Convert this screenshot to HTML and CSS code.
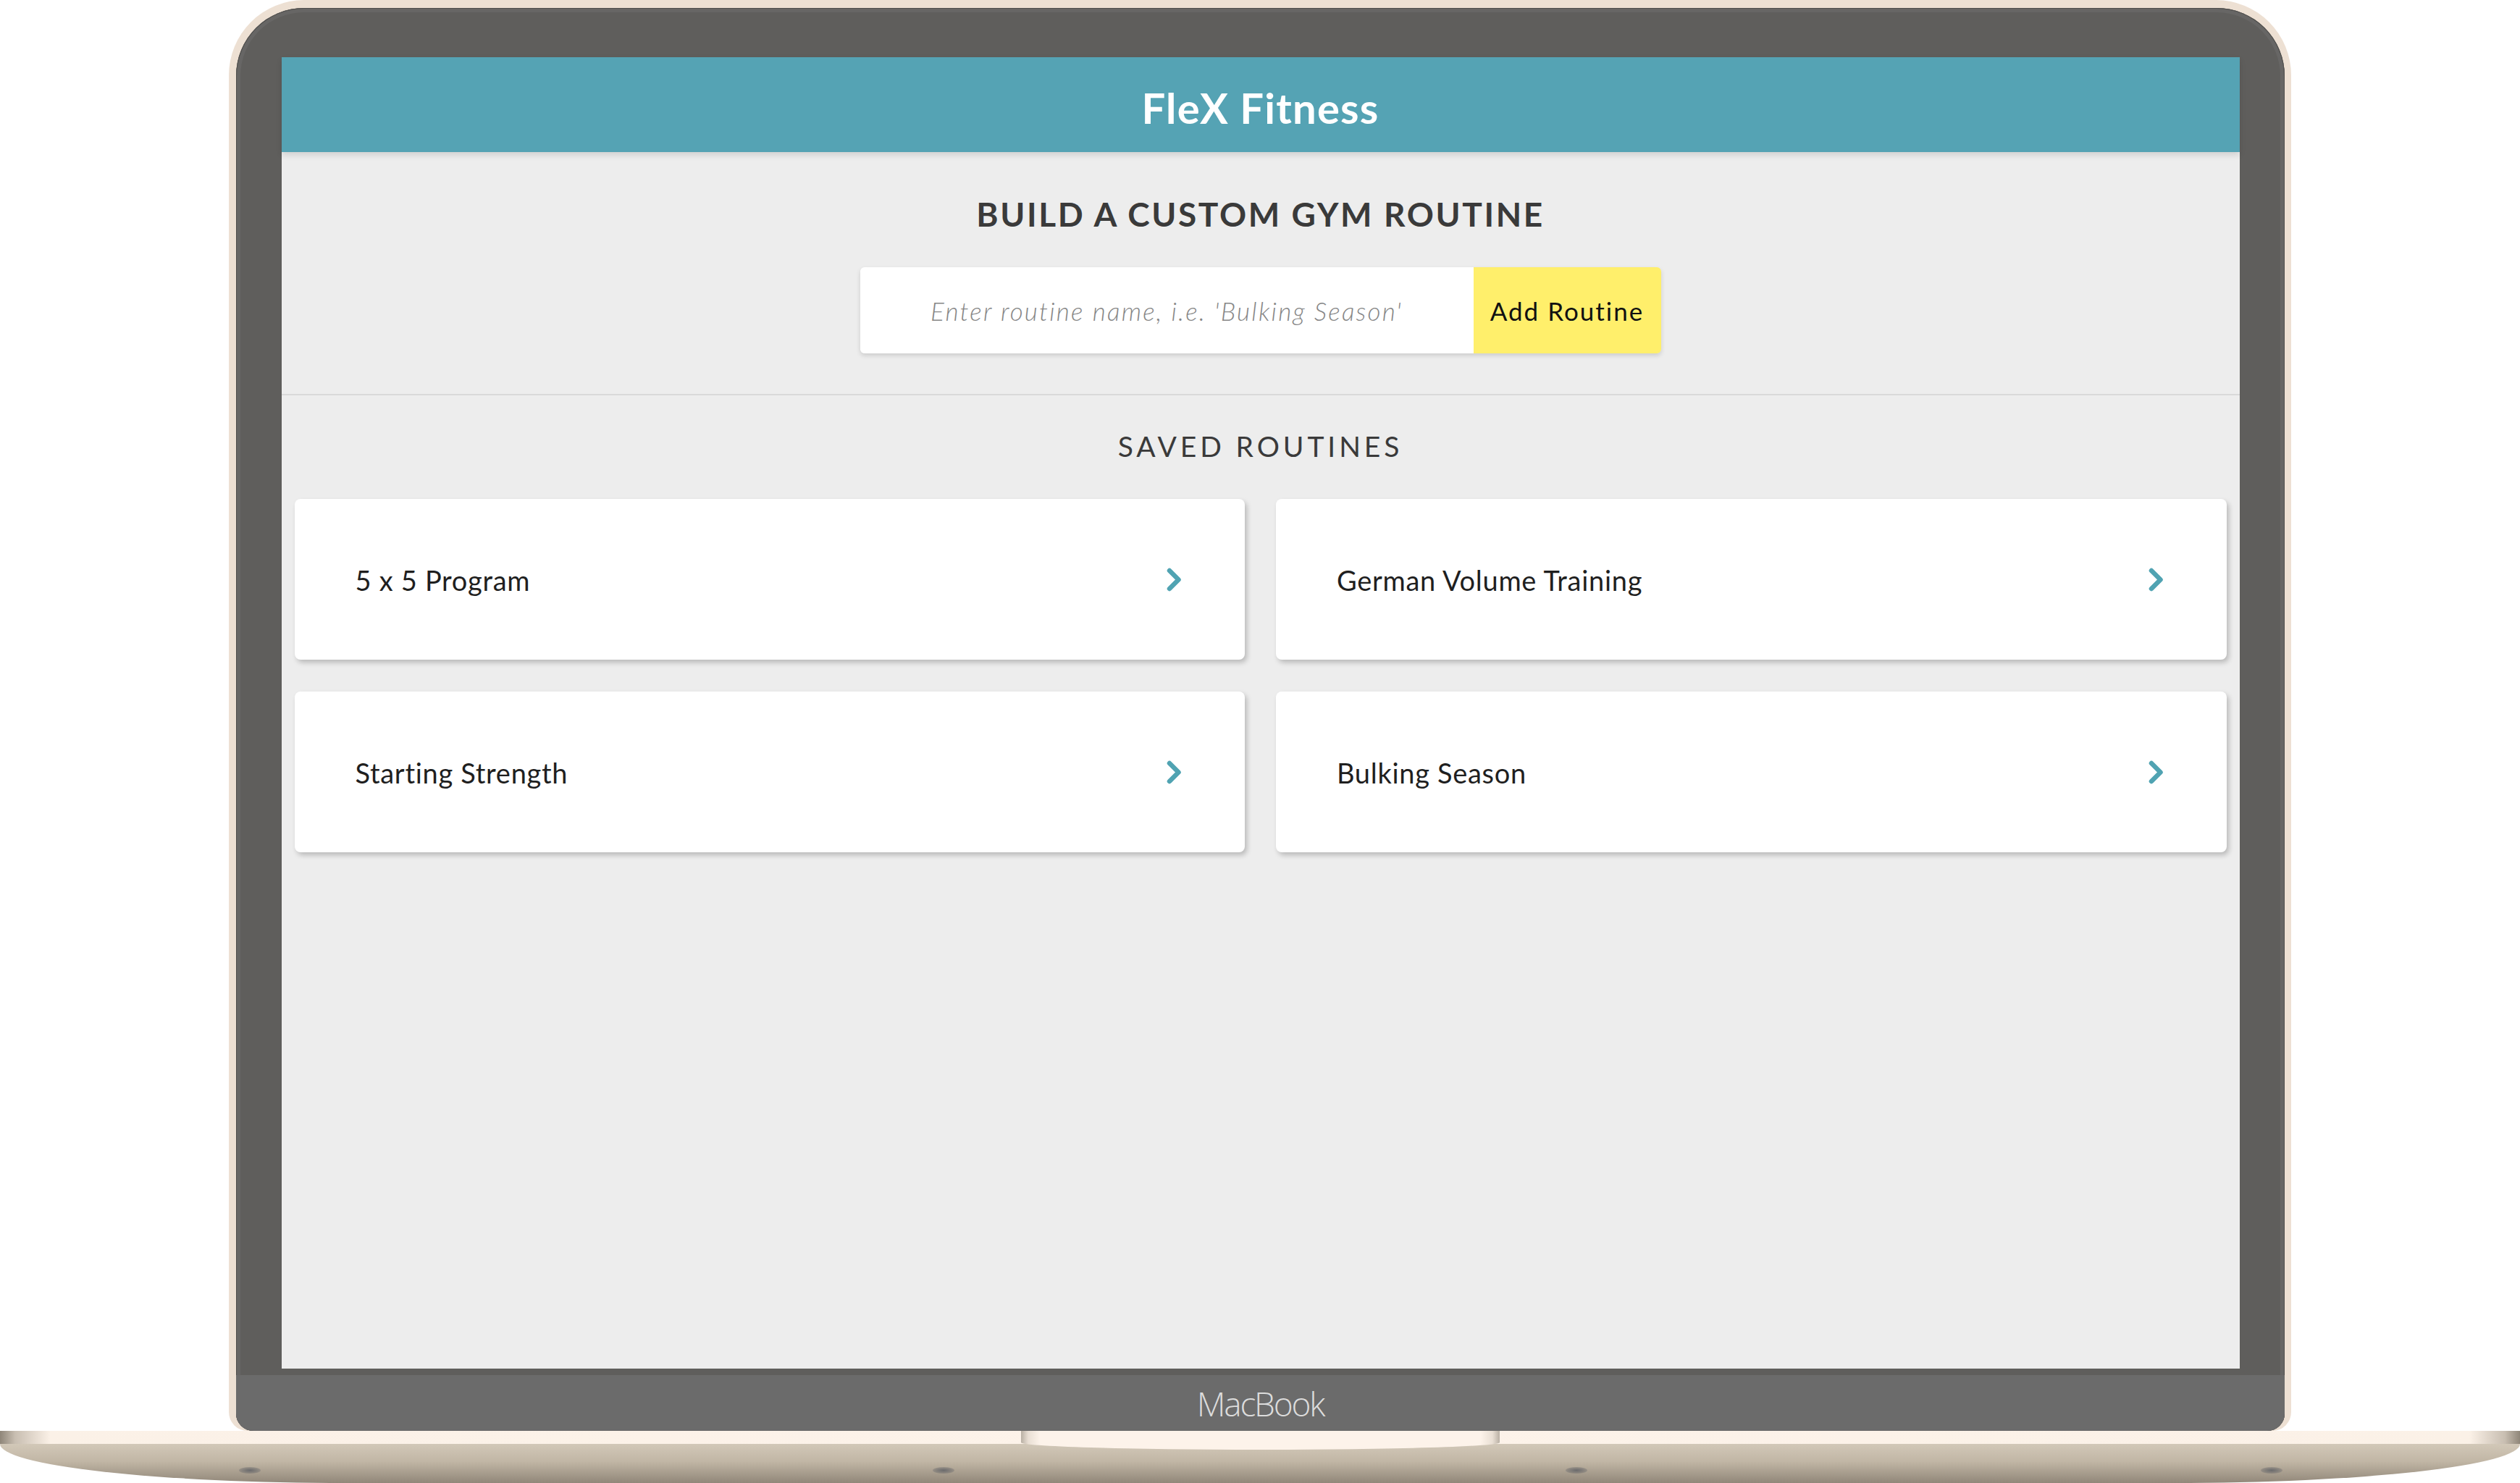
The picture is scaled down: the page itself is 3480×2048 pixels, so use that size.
FILE: index.html
```html
<!DOCTYPE html>
<html lang="en">
<head>
<meta charset="utf-8">
<title>FleX Fitness</title>
<link rel="stylesheet" href="styles.css">
</head>
<body>
<div class="page">
  <div class="lid">
    <div class="bezel">
      <div class="screen">
        <header class="app-header">FleX Fitness</header>
        <section class="builder">
          <h2 class="builder-title">BUILD A CUSTOM GYM ROUTINE</h2>
          <form class="add-form">
            <input class="add-input" type="text" placeholder="Enter routine name, i.e. 'Bulking Season'">
            <button class="add-btn" type="button">Add Routine</button>
          </form>
        </section>
        <section class="saved">
          <h2 class="saved-title">SAVED ROUTINES</h2>
          <div class="grid">
            <div class="card"><span class="card-name">5 x 5 Program</span><svg class="chev" viewBox="0 0 21 33" width="21" height="33"><path d="M4 4 L16.5 16.5 L4 29" /></svg></div>
            <div class="card"><span class="card-name">German Volume Training</span><svg class="chev" viewBox="0 0 21 33" width="21" height="33"><path d="M4 4 L16.5 16.5 L4 29" /></svg></div>
            <div class="card"><span class="card-name">Starting Strength</span><svg class="chev" viewBox="0 0 21 33" width="21" height="33"><path d="M4 4 L16.5 16.5 L4 29" /></svg></div>
            <div class="card"><span class="card-name">Bulking Season</span><svg class="chev" viewBox="0 0 21 33" width="21" height="33"><path d="M4 4 L16.5 16.5 L4 29" /></svg></div>
          </div>
        </section>
      </div>
      <div class="chin"><span class="brand">MacBook</span></div>
    </div>
  </div>
  <div class="base">
    <div class="base-top"></div>
    <div class="base-body"></div>
    <div class="notch"></div>
    <span class="foot foot-1"></span>
    <span class="foot foot-2"></span>
    <span class="foot foot-3"></span>
    <span class="foot foot-4"></span>
  </div>
</div>
</body>
</html>
```

FILE: styles.css
```css
* { box-sizing: border-box; }
html, body { margin: 0; padding: 0; background: #ffffff; }
body { font-family: "Lato", "Noto Sans", sans-serif; }

.page {
  width: 3480px;
  height: 2048px;
  overflow: hidden;
  display: flex;
  flex-direction: column;
  background: #ffffff;
}

.lid {
  width: 2848px;
  height: 1976px;
  margin: 0 auto;
  flex: none;
  padding: 11px 9px 0 10px;
  background: #ede0d3;
  border-radius: 104px 104px 26px 26px;
}

.bezel {
  height: 100%;
  display: flex;
  flex-direction: column;
  background: #5f5e5c;
  border-radius: 94px 94px 24px 24px;
  box-shadow: inset 0 0 0 1px #4f4e4c, inset 0 0 0 6px #676665;
  padding-top: 68px;
  overflow: hidden;
}

.screen {
  width: 2704px;
  height: 1811px;
  margin: 0 auto;
  flex: none;
  background: #ededed;
  display: flex;
  flex-direction: column;
}

.app-header {
  height: 131px;
  flex: none;
  background: #55a3b4;
  color: #ffffff;
  display: flex;
  align-items: center;
  justify-content: center;
  font-size: 58px;
  font-weight: 700;
  letter-spacing: 1.2px;
  padding-top: 8px;
  box-shadow: 0 4px 8px rgba(0, 0, 0, 0.12);
  position: relative;
}

.builder {
  padding: 58px 0 56px;
  border-bottom: 2px solid #d9d9d9;
  display: flex;
  flex-direction: column;
  align-items: center;
}

.builder-title {
  margin: 0;
  height: 56px;
  line-height: 56px;
  font-size: 46px;
  font-weight: 700;
  letter-spacing: 2.6px;
  color: #3a3a3a;
}

.add-form {
  margin: 45px 0 0;
  width: 1106px;
  height: 119px;
  display: flex;
  border-radius: 6px;
  box-shadow: 0 3px 6px rgba(0, 0, 0, 0.14);
}

.add-input {
  flex: 1;
  min-width: 0;
  border: none;
  outline: none;
  background: #ffffff;
  border-radius: 6px 0 0 6px;
  font-family: inherit;
  font-size: 35px;
  letter-spacing: 2.2px;
  text-align: center;
  color: #333;
  padding: 0 10px;
}
.add-input::placeholder {
  color: #868686;
  font-style: italic;
  font-weight: 300;
}

.add-btn {
  width: 259px;
  flex: none;
  border: none;
  background: #ffef6b;
  border-radius: 0 6px 6px 0;
  font-family: inherit;
  font-size: 35px;
  letter-spacing: 2px;
  color: #111111;
  padding: 0;
}

.saved {
  padding-top: 46px;
  display: flex;
  flex-direction: column;
  align-items: center;
}

.saved-title {
  margin: 0;
  height: 48px;
  line-height: 48px;
  font-size: 39px;
  font-weight: 400;
  letter-spacing: 4.9px;
  color: #3a3a3a;
}

.grid {
  margin-top: 49px;
  width: 100%;
  padding: 0 18px;
  display: grid;
  grid-template-columns: 1fr 1fr;
  gap: 44px 43px;
}

.card {
  height: 222px;
  background: #ffffff;
  border-radius: 8px;
  box-shadow: 3px 4px 7px rgba(0, 0, 0, 0.22);
  display: flex;
  align-items: center;
  justify-content: space-between;
  padding: 0 87px 0 84px;
}

.card-name {
  font-size: 38px;
  letter-spacing: 0.7px;
  color: #1f1f1f;
  padding-top: 2px;
}

.chev {
  display: block;
  fill: none;
  stroke: #50a3b2;
  stroke-width: 6.5;
  stroke-linecap: round;
  stroke-linejoin: round;
}

.chin {
  flex: none;
  margin-top: 9px;
  height: 77px;
  background: #6b6b6b;
  display: flex;
  align-items: center;
  justify-content: center;
}

.brand {
  font-family: "Open Sans", "Noto Sans", sans-serif;
  font-weight: 300;
  font-size: 46px;
  letter-spacing: -2.2px;
  color: #dcdcdc;
}

.base {
  flex: none;
  width: 3480px;
  height: 72px;
  position: relative;
  display: flex;
  flex-direction: column;
}

.base-top {
  height: 18px;
  background: linear-gradient(to right, #8f8679 0, #c8beb1 0.6%, #fbf1e7 2%, #fdf3ea 50%, #fbf1e7 98%, #c8beb1 99.4%, #8f8679 100%);
}

.base-body {
  flex: 1;
  background: linear-gradient(to bottom, #d2c8b8 0%, #c1b6a5 45%, #918779 100%);
  border-radius: 0 0 480px 480px / 0 0 54px 54px;
}

.notch {
  position: absolute;
  left: 1410px;
  top: 0;
  width: 661px;
  height: 26px;
  background: linear-gradient(to right, #b9b0a4 0, #e9dfd4 1.5%, #fdf3ea 4%, #fdf3ea 96%, #e9dfd4 98.5%, #b9b0a4 100%);
  border-radius: 0 0 50% 50% / 0 0 10px 10px;
}

.foot {
  position: absolute;
  top: 50px;
  width: 30px;
  height: 9px;
  border-radius: 50%;
  background: radial-gradient(ellipse at center, #6a6a6c 0%, rgba(106, 106, 108, 0.5) 55%, rgba(106, 106, 108, 0) 100%);
}
.foot-1 { left: 330px; }
.foot-2 { left: 1288px; }
.foot-3 { left: 2162px; }
.foot-4 { left: 3122px; }
```
